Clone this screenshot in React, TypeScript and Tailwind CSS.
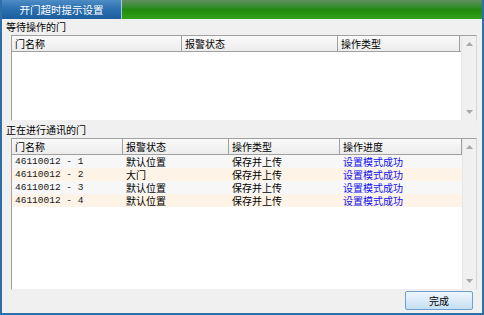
import React from "react";

const cjk = { fontFamily: '"Noto Sans CJK SC", "Liberation Sans", sans-serif' };
const mono = { fontFamily: '"Liberation Mono", "Noto Sans CJK SC", monospace' };

function Arrow({ up }: { up: boolean }) {
  return (
    <svg width="7" height="4" viewBox="0 0 7 4">
      {up ? <path d="M0 4 L3.5 0 L7 4 Z" fill="#a8a8a8" /> : <path d="M0 0 L3.5 4 L7 0 Z" fill="#a8a8a8" />}
    </svg>
  );
}

function ScrollBar() {
  return (
    <div className="w-[15px] h-full bg-[#f0f0f0] flex flex-col items-center justify-between py-[6px] border-l border-[#e6e6e6]">
      <Arrow up />
      <Arrow up={false} />
    </div>
  );
}

function Header({ cols }: { cols: { label: string; w: string }[] }) {
  return (
    <div className="flex h-[16px] bg-[#f0f0f0] border-b border-[#a0a0a0]">
      {cols.map((c, i) => (
        <div
          key={i}
          className={`${c.w} h-full flex items-center pl-[3px] text-[10px] leading-[12px] text-black border-r border-[#a0a0a0] bg-gradient-to-b from-[#fafafa] to-[#ececec]`}
          style={cjk}
        >
          {c.label}
        </div>
      ))}
    </div>
  );
}

const rows = [
  { name: "46110012 - 1", state: "默认位置" },
  { name: "46110012 - 2", state: "大门" },
  { name: "46110012 - 3", state: "默认位置" },
  { name: "46110012 - 4", state: "默认位置" },
];

export default function App() {
  return (
    <div className="w-[484px] h-[315px] bg-[#f0f0f0] border-l-2 border-r-2 border-b-2 border-[#2f6fa8] flex flex-col overflow-hidden">
      {/* title bar */}
      <div className="h-[19px] flex shrink-0">
        <div
          className="w-[119px] h-full flex items-center justify-center text-white text-[10.5px] leading-[12px] bg-gradient-to-b from-[#4d8cc4] via-[#2a6fb0] to-[#1c5e9e]"
          style={cjk}
        >
          开门超时提示设置
        </div>
        <div className="w-px h-full bg-[#a9c7dc]" />
        <div className="flex-1 h-full bg-gradient-to-b from-[#5e8f5e] via-[#1f8a0c] to-[#33a01a]" />
      </div>

      <div className="flex flex-col pl-[4px] pr-[5px]">
        <div className="h-[16px] flex items-end text-[10px] leading-[12px] text-black pb-[2px]" style={cjk}>
          等待操作的门
        </div>
        <div className="ml-[5px] h-[86px] bg-white border border-[#a0a0a0] border-r-[#d8d8d8] border-b-[#f0f0f0] flex">
          <div className="flex-1">
            <Header
              cols={[
                { label: "门名称", w: "w-[170px]" },
                { label: "报警状态", w: "w-[156px]" },
                { label: "操作类型", w: "w-[122px]" },
              ]}
            />
          </div>
          <ScrollBar />
        </div>

        <div className="h-[17px] flex items-end text-[10px] leading-[12px] text-black pb-[2px]" style={cjk}>
          正在进行通讯的门
        </div>
        <div className="ml-[5px] h-[152px] bg-white border border-[#a0a0a0] border-r-[#d8d8d8] border-b-[#f0f0f0] flex">
          <div className="flex-1">
            <Header
              cols={[
                { label: "门名称", w: "w-[111px]" },
                { label: "报警状态", w: "w-[106px]" },
                { label: "操作类型", w: "w-[111px]" },
                { label: "操作进度", w: "w-[122px]" },
              ]}
            />
            {rows.map((r, i) => (
              <div
                key={i}
                className={`flex h-[13px] items-center text-[10px] leading-[12px] ${i % 2 === 0 ? "bg-[#f7f7f7]" : "bg-[#fdf3e6]"}`}
              >
                <div className="w-[111px] pl-[3px] text-[9.5px] leading-[12px] text-[#202020]" style={mono}>
                  {r.name}
                </div>
                <div className="w-[106px] pl-[3px] text-black" style={cjk}>
                  {r.state}
                </div>
                <div className="w-[111px] pl-[3px] text-black" style={cjk}>
                  保存并上传
                </div>
                <div className="w-[122px] pl-[3px] text-[#1010f0]" style={cjk}>
                  设置模式成功
                </div>
              </div>
            ))}
          </div>
          <ScrollBar />
        </div>

        <div className="flex justify-end pt-[1px] pr-[4px]">
          <button
            className="w-[68px] h-[19px] rounded-[2px] border border-[#6f9fcc] bg-gradient-to-b from-[#eef6fd] to-[#c6dff4] text-[10px] leading-[12px] text-black flex items-center justify-center"
            style={cjk}
          >
            完成
          </button>
        </div>
      </div>
    </div>
  );
}
